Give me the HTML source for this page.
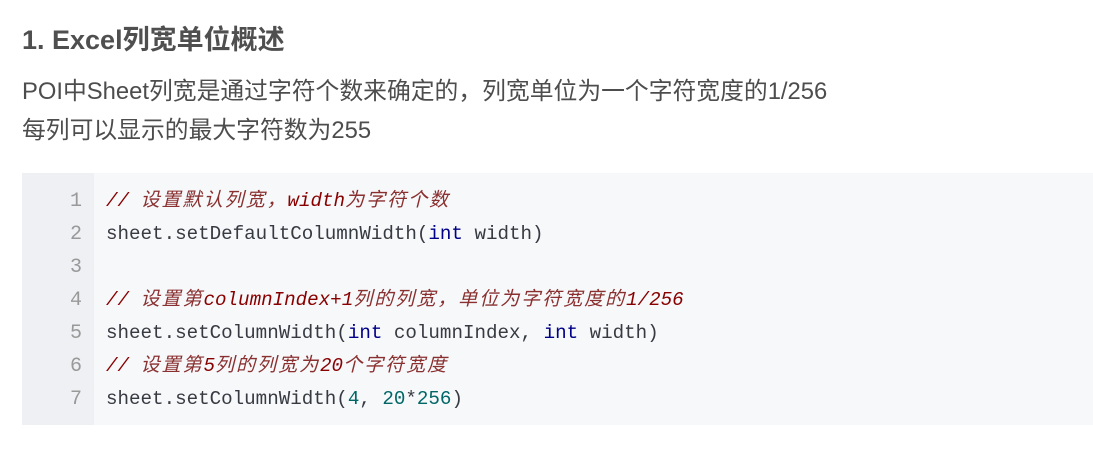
<!DOCTYPE html>
<html><head><meta charset="utf-8"><style>
body{margin:0;width:1093px;height:451px;background:#fff;overflow:hidden;font-family:"Liberation Sans","Noto Sans CJK SC",sans-serif;}
h1{position:absolute;left:22px;top:22px;margin:0;font-size:27px;line-height:36px;font-weight:bold;color:#4f4f4f;}
p{position:absolute;left:22px;top:72px;margin:0;font-size:23.8px;line-height:39px;color:#4d4d4d;}
.code{position:absolute;left:22px;top:173px;width:1071px;height:252px;background:#f6f8fa;}
.gut{position:absolute;left:0;top:0;width:72px;height:252px;background:#eef0f4;}
.ln{position:absolute;left:0;width:60px;height:33px;line-height:33px;text-align:right;color:#999;font-family:"Liberation Mono",monospace;font-size:20px;}
.l{position:absolute;left:84px;height:33px;line-height:33px;white-space:pre;font-family:"Liberation Mono","Noto Sans CJK SC",monospace;font-size:19.2px;color:#383a42;}
.c{color:#880000;font-style:italic}
.z{letter-spacing:1.8px;color:#8a3030}
.k{color:#000088}
.n{color:#006666}
</style></head><body>
<h1>1. Excel列宽单位概述</h1>
<p>POI中Sheet列宽是通过字符个数来确定的，列宽单位为一个字符宽度的1/256<br>每列可以显示的最大字符数为255</p>
<div class="code"><div class="gut"></div>
<div class="ln" style="top:12px">1</div><div class="l" style="top:12px"><span class="c">// <span class="z">设置默认列宽，</span>width<span class="z">为字符个数</span></span></div>
<div class="ln" style="top:45px">2</div><div class="l" style="top:45px">sheet.setDefaultColumnWidth(<span class="k">int</span> width)</div>
<div class="ln" style="top:78px">3</div>
<div class="ln" style="top:111px">4</div><div class="l" style="top:111px"><span class="c">// <span class="z">设置第</span>columnIndex+1<span class="z">列的列宽，单位为字符宽度的</span>1/256</span></div>
<div class="ln" style="top:144px">5</div><div class="l" style="top:144px">sheet.setColumnWidth(<span class="k">int</span> columnIndex, <span class="k">int</span> width)</div>
<div class="ln" style="top:177px">6</div><div class="l" style="top:177px"><span class="c">// <span class="z">设置第</span>5<span class="z">列的列宽为</span>20<span class="z">个字符宽度</span></span></div>
<div class="ln" style="top:210px">7</div><div class="l" style="top:210px">sheet.setColumnWidth(<span class="n">4</span>, <span class="n">20</span>*<span class="n">256</span>)</div>
</div>
</body></html>
